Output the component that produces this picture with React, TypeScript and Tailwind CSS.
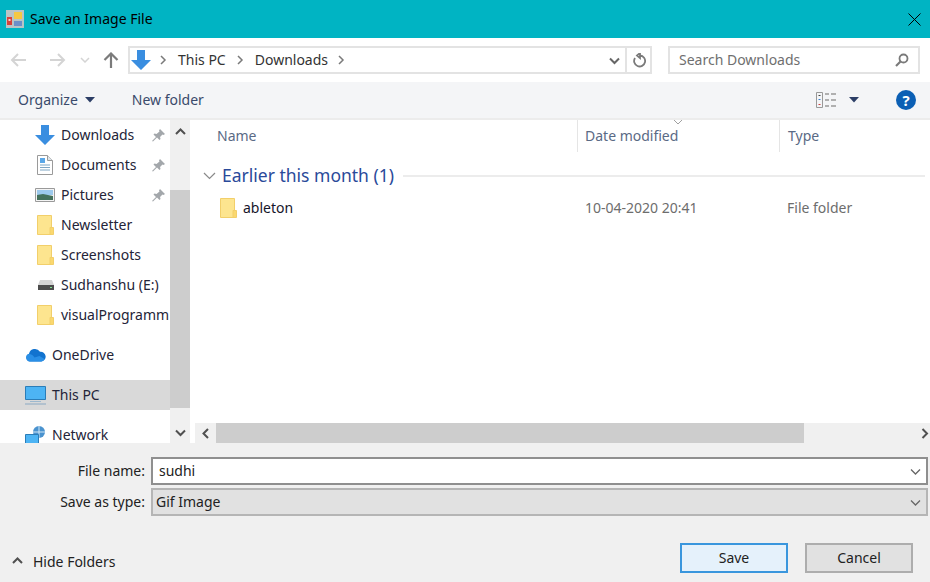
import React from 'react'

const DownArrow = ({ size = 20 }: { size?: number }) => (
    <svg width={size} height={size} viewBox="0 0 20 20">
        <path d="M6 0h8v10h6L10 20 0 10h6z" fill="#3a8ee0" />
    </svg>
)

const FolderIcon = () => (
    <svg width="17" height="20" viewBox="0 0 17 20" className="ml-[2px]">
        <path d="M.5.5h14v19H.5z" fill="#fde58f" stroke="#f2cf6a" />
        <path d="M13 12.500h3.500v7H13z" fill="#fbd86f" stroke="#f2cf6a" />
    </svg>
)

const DocIcon = () => (
    <svg width="16" height="20" viewBox="0 0 16 20" className="ml-[2px]">
        <path d="M.5.5h10l5 5v14H.5z" fill="#fff" stroke="#9a9a9a" />
        <path d="M10.500.5v5h5" fill="#dfe6ea" stroke="#9a9a9a" />
        <path d="M3 3h5v5H3z" fill="#5aa7e8" />
        <path d="M3 10h10M3 12.500h10M3 15h10" stroke="#7fa6c4" />
    </svg>
)

const PictureIcon = () => (
    <svg width="20" height="14" viewBox="0 0 20 14">
        <path d="M.5.5h19v13H.5z" fill="#f4f4f4" stroke="#9a9a9a" />
        <path d="M2 2h16v5H2z" fill="#9cc9ec" />
        <path d="M2 7l6-1 10 2v4H2z" fill="#44715c" />
    </svg>
)

const DriveIcon = () => (
    <svg width="18" height="12" viewBox="0 0 18 12" className="ml-[2px]">
        <path d="M3 1h12l2 5H1z" fill="#d4d4d4" />
        <path d="M1 6h16v5H1z" fill="#4c4c4c" />
        <path d="M13 8h2v1h-2z" fill="#7fe08a" />
    </svg>
)

const CloudIcon = () => (
    <svg width="21" height="14" viewBox="0 0 21 14">
        <path d="M5 13.500a4 4 0 0 1-1-7.800A6 6 0 0 1 15 3.800a4.800 4.800 0 0 1 1.500 9.700z" fill="#1273cf" />
        <path d="M5 13.500a4 4 0 0 1-1.500-7.600c3 .1 5 1.500 6 3.600l5-1.500 5 3c-.5 1.400-2 2.500-3.500 2.500z" fill="#2a8fe6" />
    </svg>
)

const MonitorIcon = () => (
    <svg width="21" height="19" viewBox="0 0 21 19">
        <path d="M.5.500h20v13H.5z" fill="#4db4f4" stroke="#2b7db8" />
        <path d="M5 15h11v1H5z" fill="#9db9cf" />
        <path d="M0 17.500h21v1H0z" fill="#8aa9c2" />
    </svg>
)

const NetworkIcon = () => (
    <svg width="21" height="18" viewBox="0 0 21 18">
        <circle cx="14" cy="6" r="6" fill="#4a93cf" />
        <path d="M14 0v12M8 6h12" stroke="#cfe6f6" />
        <path d="M.5 8.500h13v9H.5z" fill="#4db4f4" stroke="#2b7db8" />
    </svg>
)

const PinIcon = () => (
    <svg width="13" height="13" viewBox="0 0 13 13">
        <path d="M8 0l5 5-1.500 1-1-.500L8 8l.5 2-1 1-2.500-2.500L1 12.500 0 12l4-4-2.500-2.500 1-1 2 .5L7.500 2.500 7 1.500z" fill="#a3a7ab" />
    </svg>
)

const Chevron = ({ dir, color = '#505050', width = 2 }: { dir: 'up' | 'down' | 'left' | 'right'; color?: string; width?: number }) => {
    const paths = {
        up: 'M2 9l4.500-4.500L11 9',
        down: 'M2 4.500L6.500 9 11 4.500',
        left: 'M9 2L4.500 6.500 9 11',
        right: 'M4.500 2L9 6.500 4.500 11',
    }
    return (
        <svg width="13" height="13" viewBox="0 0 13 13" fill="none">
            <path d={paths[dir]} stroke={color} strokeWidth={width} />
        </svg>
    )
}

const Caret = () => (
    <svg width="10" height="6" viewBox="0 0 10 6">
        <path d="M0 0h10L5 5.500z" fill="#2c3e66" />
    </svg>
)

const Crumb = () => (
    <svg width="7" height="10" viewBox="0 0 7 10" fill="none">
        <path d="M1 1l4 4-4 4" stroke="#7a7a7a" strokeWidth="1.500" />
    </svg>
)

const SidebarRow = ({ icon, label, pin, indent, selected }: { icon: React.ReactNode; label: string; pin?: boolean; indent?: boolean; selected?: boolean }) => (
    <div className={`flex h-[30px] shrink-0 items-center overflow-hidden ${indent ? 'pl-[35px]' : 'pl-[25px]'} ${selected ? 'bg-[#d9d9d9]' : ''}`}>
        <div className={`flex shrink-0 items-center ${indent ? 'w-[26px]' : 'w-[27px]'}`}>{icon}</div>
        <span className="whitespace-nowrap">{label}</span>
        {pin && <div className="ml-auto mr-[5px] shrink-0"><PinIcon /></div>}
    </div>
)

const App = () => {
    return (
        <div className="relative flex h-[582px] w-[930px] flex-col overflow-hidden bg-white text-[14px] leading-[20px] text-[#1a1a2a] font-['Noto_Sans',sans-serif]">
            {/* title bar */}
            <div className="flex h-[38px] shrink-0 items-center bg-[#00b4c3] pl-[6px] pr-[9px]">
                <svg width="18" height="18" viewBox="0 0 18 18" className="mr-[6px]">
                    <path d="M0 0h18v18H0z" fill="#b9c4c6" />
                    <path d="M8 2h8v7H8z" fill="#f5c842" />
                    <path d="M1 7h5v8H1z" fill="#d8413a" />
                    <path d="M2.500 9h2v2h-2z" fill="#f7d0c8" />
                    <path d="M8 11h8v5H8z" fill="#6d8fc9" />
                </svg>
                <span className="text-black">Save an Image File</span>
                <svg width="13" height="13" viewBox="0 0 13 13" className="ml-auto" fill="none">
                    <path d="M.5.5l12 12M12.500.5l-12 12" stroke="#000" strokeWidth="1" />
                </svg>
            </div>

            {/* address row */}
            <div className="flex h-[44px] shrink-0 items-center pl-[10px] pr-[10px]">
                <div className="flex w-[118px] shrink-0 items-center">
                    <svg width="18" height="14" viewBox="0 0 18 14" fill="none" className="mr-[20px]">
                        <path d="M16 7H2M8 1L2 7l6 6" stroke="#d4d4d4" strokeWidth="2" />
                    </svg>
                    <svg width="18" height="14" viewBox="0 0 18 14" fill="none" className="mr-[14px]">
                        <path d="M2 7h14M10 1l6 6-6 6" stroke="#d4d4d4" strokeWidth="2" />
                    </svg>
                    <svg width="10" height="6" viewBox="0 0 10 6" fill="none" className="mr-[13px]">
                        <path d="M1 1l4 4 4-4" stroke="#d4d4d4" strokeWidth="1.500" />
                    </svg>
                    <svg width="16" height="16" viewBox="0 0 16 16" fill="none">
                        <path d="M8 16V2M1.500 8L8 1.500 14.500 8" stroke="#7b7b7b" strokeWidth="2.200" />
                    </svg>
                </div>
                <div className="flex h-[28px] w-[524px] shrink-0 items-center border-2 border-[#e3e3e3] pl-[1px] text-[#333]">
                    <DownArrow />
                    <div className="ml-[9px] mr-[11px]"><Crumb /></div>
                    <span>This PC</span>
                    <div className="mx-[11px]"><Crumb /></div>
                    <span>Downloads</span>
                    <div className="ml-[10px]"><Crumb /></div>
                    <div className="ml-auto mr-[4px]"><Chevron dir="down" color="#666" /></div>
                    <div className="flex h-full w-[25px] items-center justify-center border-l-2 border-[#e3e3e3]">
                        <svg width="14" height="15" viewBox="0 0 14 15" fill="none">
                            <path d="M8 2.500a5.500 5.500 0 1 1-5 2.500M8 0v5L5 2.500z" stroke="#7a7a7a" strokeWidth="1.800" />
                        </svg>
                    </div>
                </div>
                <div className="ml-[16px] flex h-[28px] w-[252px] shrink-0 items-center border-2 border-[#e3e3e3] pl-[9px] pr-[9px] text-[#6f6f6f]">
                    <span>Search Downloads</span>
                    <svg width="14" height="14" viewBox="0 0 14 14" fill="none" className="ml-auto">
                        <circle cx="8.500" cy="5.500" r="4" stroke="#7a7a7a" strokeWidth="1.800" />
                        <path d="M5.500 8.500L1 13" stroke="#7a7a7a" strokeWidth="2.200" />
                    </svg>
                </div>
            </div>

            {/* toolbar */}
            <div className="flex h-[38px] shrink-0 items-center border-b-2 border-[#ececec] bg-[#f4f5f7] pl-[18px] pr-[14px] text-[#3a4a6b]">
                <span>Organize</span>
                <div className="ml-[7px]"><Caret /></div>
                <span className="ml-[37px]">New folder</span>
                <svg width="21" height="16" viewBox="0 0 21 16" fill="none" className="ml-auto">
                    <path d="M.5.500h6v15h-6z" fill="#f4f5f7" stroke="#999" />
                    <path d="M2.500 3h2v1h-2z" fill="#444" />
                    <path d="M2.500 7h2v1h-2z" fill="#3a80d0" />
                    <path d="M2.500 12h2v1h-2z" fill="#d04040" />
                    <path d="M9 2h4M15 2h5M9 8h4M15 8h5M9 14h4M15 14h5" stroke="#999" strokeWidth="1.500" />
                </svg>
                <div className="ml-[12px]"><Caret /></div>
                <div className="ml-[37px] flex h-[20px] w-[20px] items-center justify-center rounded-full bg-[#0b5fb4] text-[15px] leading-none font-bold text-white">?</div>
            </div>

            {/* main */}
            <div className="flex h-[323px] shrink-0">
                <div className="flex w-[170px] shrink-0 flex-col overflow-hidden text-[#242438]">
                    <SidebarRow indent icon={<DownArrow />} label="Downloads" pin />
                    <SidebarRow indent icon={<DocIcon />} label="Documents" pin />
                    <SidebarRow indent icon={<PictureIcon />} label="Pictures" pin />
                    <SidebarRow indent icon={<FolderIcon />} label="Newsletter" />
                    <SidebarRow indent icon={<FolderIcon />} label="Screenshots" />
                    <SidebarRow indent icon={<DriveIcon />} label="Sudhanshu (E:)" />
                    <SidebarRow indent icon={<FolderIcon />} label="visualProgramm" />
                    <div className="mt-[10px]"><SidebarRow icon={<CloudIcon />} label="OneDrive" /></div>
                    <div className="mt-[10px]"><SidebarRow icon={<MonitorIcon />} label="This PC" selected /></div>
                    <div className="mt-[10px]"><SidebarRow icon={<NetworkIcon />} label="Network" /></div>
                </div>

                {/* sidebar scrollbar */}
                <div className="flex w-[20px] shrink-0 flex-col bg-[#f0f0f0]">
                    <div className="flex h-[70px] shrink-0 justify-center pt-[5px]"><Chevron dir="up" /></div>
                    <div className="h-[218px] shrink-0 bg-[#cdcdcd]" />
                    <div className="flex flex-1 items-end justify-center pb-[4px]"><Chevron dir="down" /></div>
                </div>

                {/* file list */}
                <div className="flex min-w-0 flex-1 flex-col">
                    <div className="relative flex h-[32px] shrink-0 text-[#5a6a85]">
                        <div className="flex w-[388px] items-center border-r border-[#e5e5e5] pl-[27px]">Name</div>
                        <div className="flex w-[202px] items-center border-r border-[#e5e5e5] pl-[7px]">Date modified</div>
                        <div className="flex flex-1 items-center pl-[8px]">Type</div>
                        <svg width="10" height="5" viewBox="0 0 10 5" fill="none" className="absolute top-0 left-[483px]">
                            <path d="M1 0l4 4 4-4" stroke="#a0a0a0" />
                        </svg>
                    </div>
                    <div className="mt-[12px] flex h-[23px] shrink-0 items-center pl-[13px] pr-[5px]">
                        <svg width="13" height="8" viewBox="0 0 13 8" fill="none">
                            <path d="M1 1l5.500 5.500L12 1" stroke="#8a8a8a" strokeWidth="1.200" />
                        </svg>
                        <span className="ml-[6px] text-[17.500px] leading-[23px] text-[#2a4a9a]">Earlier this month (1)</span>
                        <div className="ml-[9px] h-[2px] flex-1 bg-[#ececec]" />
                    </div>
                    <div className="mt-[5px] flex h-[30px] shrink-0 items-center pt-[1px]">
                        <div className="flex w-[395px] items-center pl-[28px]">
                            <FolderIcon />
                            <span className="ml-[6px] text-[#15152a]">ableton</span>
                        </div>
                        <span className="w-[202px] text-[#6d6d6d]">10-04-2020 20:41</span>
                        <span className="text-[#6d6d6d]">File folder</span>
                    </div>
                    <div className="flex-1" />
                    {/* horizontal scrollbar */}
                    <div className="ml-[5px] flex h-[20px] shrink-0 items-center bg-[#f0f0f0]">
                        <div className="flex w-[21px] shrink-0 justify-center"><Chevron dir="left" /></div>
                        <div className="h-full w-[588px] bg-[#cdcdcd]" />
                        <div className="ml-auto mr-[-2px] flex w-[16px] justify-center"><Chevron dir="right" /></div>
                    </div>
                </div>
            </div>

            {/* footer */}
            <div className="flex flex-1 flex-col bg-[#f0f0f0] pt-[14px]">
                <div className="grid grid-cols-[145px_777px] items-center gap-x-[6px] gap-y-[3px] text-[#222]">
                    <span className="text-right">File name:</span>
                    <div className="flex h-[28px] items-center border-2 border-[#8f8f8f] bg-white pl-[6px] pr-[4px]">
                        <span>sudhi</span>
                        <div className="ml-auto"><Chevron dir="down" color="#666" width={1.300} /></div>
                    </div>
                    <span className="text-right">Save as type:</span>
                    <div className="flex h-[28px] items-center border-2 border-[#b5b5b5] bg-[#e1e1e1] pl-[3px] pr-[4px]">
                        <span>Gif Image</span>
                        <div className="ml-auto"><Chevron dir="down" color="#666" width={1.300} /></div>
                    </div>
                </div>
                <div className="mt-[27px] flex items-center pl-[11px] pr-[17px]">
                    <div className="mt-[4px]"><Chevron dir="up" color="#505050" /></div>
                    <span className="ml-[9px] mt-[7px] text-[#222]">Hide Folders</span>
                    <button className="ml-auto h-[30px] w-[108px] border-2 border-[#3a96dd] bg-[#e5f1fb] text-[#222]">Save</button>
                    <button className="ml-[17px] h-[30px] w-[108px] border-2 border-[#adadad] bg-[#e1e1e1] text-[#222]">Cancel</button>
                </div>
            </div>
        </div>
    )
}

export default App
